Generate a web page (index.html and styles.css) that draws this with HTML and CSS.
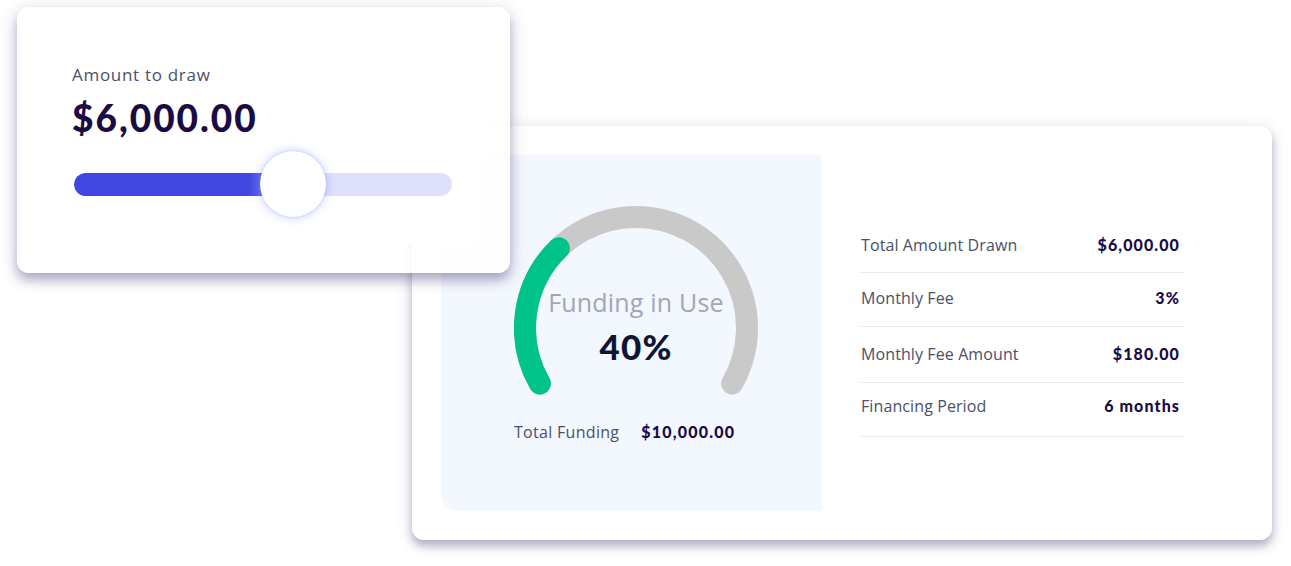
FILE: index.html
```html
<!DOCTYPE html>
<html lang="en">
<head>
<meta charset="utf-8">
<title>Draw funds</title>
<link rel="stylesheet" href="styles.css">
</head>
<body>
<div class="stage">
  <section class="summary-card">
    <div class="usage-panel">
      <div class="gauge">
        <svg class="gauge-svg" width="244" height="190" viewBox="0 0 244 190">
          <path d="M25.87 177.5 A111 111 0 1 1 218.13 177.5" fill="none" stroke="#c9c9c9" stroke-width="22" stroke-linecap="round"/>
          <path d="M25.87 177.5 A111 111 0 0 1 44.89 42.15" fill="none" stroke="#00c389" stroke-width="22" stroke-linecap="round"/>
        </svg>
        <div class="gauge-text">
          <div class="gauge-label">Funding in Use</div>
          <div class="gauge-value">40%</div>
        </div>
      </div>
      <div class="total-row">
        <span class="total-label">Total Funding</span>
        <span class="total-value">$10,000.00</span>
      </div>
    </div>
    <div class="details">
      <div class="detail-row row-a"><span class="d-label">Total Amount Drawn</span><span class="d-value">$6,000.00</span></div>
      <div class="detail-row row-b"><span class="d-label">Monthly Fee</span><span class="d-value">3%</span></div>
      <div class="detail-row row-c"><span class="d-label">Monthly Fee Amount</span><span class="d-value">$180.00</span></div>
      <div class="detail-row row-d"><span class="d-label">Financing Period</span><span class="d-value">6 months</span></div>
    </div>
  </section>

  <section class="draw-card">
    <div class="draw-inner">
      <div class="draw-label">Amount to draw</div>
      <div class="draw-amount">$6,000.00</div>
      <div class="slider">
        <div class="slider-track">
          <div class="slider-fill"></div>
        </div>
        <div class="slider-thumb"></div>
      </div>
    </div>
  </section>
</div>
</body>
</html>
```

FILE: styles.css
```css
* { box-sizing: border-box; }

html, body {
  margin: 0;
  padding: 0;
  background: #ffffff;
}

body {
  font-family: "Open Sans", "Liberation Sans", sans-serif;
  width: 1291px;
  height: 566px;
  overflow: hidden;
}

.stage {
  position: relative;
  padding: 126px 0 0 412px;
}

/* ---------- big summary card ---------- */
.summary-card {
  width: 860px;
  height: 414px;
  background: #ffffff;
  border-radius: 12px;
  box-shadow: 0 6px 10px rgba(70, 62, 110, 0.38), 0 2px 18px rgba(90, 80, 150, 0.12);
  padding: 29px 0 29px 29px;
  display: flex;
  align-items: stretch;
}

.usage-panel {
  width: 380px;
  background: #f3f7fe;
  border-radius: 18px 0 0 18px;
  padding: 51px 0 0 73px;
  display: flex;
  flex-direction: column;
}

.gauge {
  position: relative;
  width: 244px;
  height: 190px;
}

.gauge-svg { display: block; }

.gauge-text {
  position: absolute;
  left: 0;
  right: 0;
  top: 81px;
  text-align: center;
}

.gauge-label {
  font-size: 25px;
  line-height: 30px;
  color: #a2a5b6;
  letter-spacing: 0.2px;
}

.gauge-value {
  font-family: "Lato", "Open Sans", sans-serif;
  font-weight: 900;
  font-size: 35px;
  line-height: 40px;
  color: #0f1535;
  margin-top: 9px;
  letter-spacing: 1.2px;
}

.total-row {
  display: flex;
  gap: 22px;
  margin-top: 26px;
  align-items: baseline;
  font-size: 16px;
  line-height: 20px;
}

.total-label { color: #4b5068; letter-spacing: 0.3px; }

.total-value {
  font-family: "Lato", "Open Sans", sans-serif;
  font-weight: 900;
  color: #1a0b45;
  letter-spacing: 1.2px;
}

.details {
  width: 323px;
  margin-left: 40px;
  padding-top: 63px;
}

.detail-row {
  display: flex;
  justify-content: space-between;
  align-items: center;
  border-bottom: 1.5px solid #e7e7ec;
  font-size: 16px;
  line-height: 20px;
}

.row-a { padding: 17px 4px 17px 0; }
.row-b { padding: 15px 4px 18px 0; }
.row-c { padding: 17px 4px 18px 0; }
.row-d { padding: 13px 4px 20px 0; }

.d-label { color: #4b5068; letter-spacing: 0.1px; }

.d-value {
  font-family: "Lato", "Open Sans", sans-serif;
  font-weight: 900;
  color: #1a0b45;
  letter-spacing: 1.1px;
}

/* ---------- amount to draw card ---------- */
.draw-card {
  position: absolute;
  left: 17px;
  top: 7px;
  width: 493px;
  height: 266px;
  border-radius: 12px;
  background: rgba(255, 255, 255, 0.86);
  box-shadow: 0 7px 12px rgba(70, 62, 120, 0.4), 0 2px 20px rgba(90, 80, 150, 0.14);
}

.draw-inner {
  width: 466px;
  height: 238px;
  background: #ffffff;
  border-radius: 12px 12px 16px 12px;
  padding: 57px 0 0 55px;
}

.draw-label {
  font-size: 17px;
  line-height: 22px;
  color: #4b5068;
  letter-spacing: 0.7px;
}

.draw-amount {
  font-family: "Lato", "Open Sans", sans-serif;
  font-weight: 900;
  font-size: 37px;
  line-height: 44px;
  color: #1a0b45;
  margin-top: 10px;
  letter-spacing: 2px;
}

.slider {
  position: relative;
  width: 378px;
  height: 66px;
  margin: 11px 0 0 2px;
  display: flex;
  align-items: center;
}

.slider-track {
  width: 100%;
  height: 23px;
  border-radius: 12px;
  background: #dfe0fb;
  overflow: hidden;
}

.slider-fill {
  width: 52%;
  height: 100%;
  background: linear-gradient(90deg, #4046e0 0%, #4046e0 88%, #6f74ee 100%);
  border-radius: 12px 0 0 12px;
}

.slider-thumb {
  position: absolute;
  left: 186px;
  top: 0;
  width: 66px;
  height: 66px;
  border-radius: 50%;
  background: #ffffff;
  box-shadow: 0 0 10px rgba(110, 130, 255, 0.45), 0 0 2px rgba(110, 130, 255, 0.35);
}
```
